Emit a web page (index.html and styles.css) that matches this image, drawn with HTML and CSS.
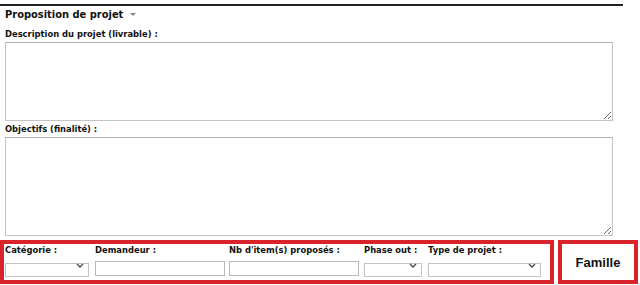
FILE: index.html
```html
<!DOCTYPE html>
<html lang="fr">
<head>
  <meta charset="UTF-8">
  <title>Proposition de projet</title>
  <link rel="stylesheet" href="styles.css">
</head>
<body>
<form class="project-form">
  <div class="section-head">
    <h2>Proposition de projet <span class="caret"></span></h2>
  </div>

  <label class="block-label first" for="livrable">Description du projet (livrable) :</label>
  <textarea id="livrable" class="long-text desc"></textarea>

  <label class="block-label" for="finalite">Objectifs (finalité) :</label>
  <textarea id="finalite" class="long-text goals"></textarea>

  <div class="bottom-row">
    <div class="fields-box">
      <div class="field">
        <label>Catégorie :</label>
        <span class="select-wrap w-cat">
          <select name="categorie"><option></option></select>
          <svg class="chev" width="8" height="5" viewBox="0 0 8 5"><path d="M1 1 L4 4 L7 1" fill="none" stroke="#444" stroke-width="1.3"/></svg>
        </span>
      </div>
      <div class="field">
        <label>Demandeur :</label>
        <input type="text" name="demandeur" class="w-dem">
      </div>
      <div class="field">
        <label>Nb d'item(s) proposés :</label>
        <input type="text" name="nb_items" class="w-nb">
      </div>
      <div class="field">
        <label>Phase out :</label>
        <span class="select-wrap w-phase">
          <select name="phase_out"><option></option></select>
          <svg class="chev" width="8" height="5" viewBox="0 0 8 5"><path d="M1 1 L4 4 L7 1" fill="none" stroke="#444" stroke-width="1.3"/></svg>
        </span>
      </div>
      <div class="field">
        <label>Type de projet :</label>
        <span class="select-wrap w-type">
          <select name="type_projet"><option></option></select>
          <svg class="chev" width="8" height="5" viewBox="0 0 8 5"><path d="M1 1 L4 4 L7 1" fill="none" stroke="#444" stroke-width="1.3"/></svg>
        </span>
      </div>
    </div>
    <div class="famille-box">Famille</div>
  </div>
</form>
</body>
</html>
```

FILE: styles.css
```css
body {
  margin: 0;
  padding: 0;
  background: #fff;
  font-family: "DejaVu Sans", Verdana, sans-serif;
  color: #111;
}
.project-form {
  padding-top: 4px;
}
.section-head {
  width: 623px;
  border-top: 2px solid #222;
}
h2 {
  margin: 2px 0 0 5px;
  font-family: "DejaVu Sans Condensed", "DejaVu Sans", sans-serif;
  font-stretch: condensed;
  font-size: 11px;
  font-weight: bold;
  line-height: 14px;
  color: #111;
}
.caret {
  display: inline-block;
  margin-left: 3px;
  vertical-align: 2px;
  border-left: 3px solid transparent;
  border-right: 3px solid transparent;
  border-top: 3px solid #888;
}
.block-label {
  display: block;
  margin: 3px 0 0 5px;
  font-size: 8.4px;
  font-weight: bold;
  line-height: 11px;
}
.block-label.first {
  margin-top: 7px;
}
.long-text {
  display: block;
  box-sizing: border-box;
  width: 608px;
  margin: 2px 0 0 5px;
  padding: 2px;
  border: 1px solid #c4c4c4;
  border-top-color: #b0b0b0;
  font-family: "DejaVu Sans", sans-serif;
  font-size: 9px;
}
.desc {
  height: 79px;
}
.goals {
  height: 99px;
}
.bottom-row {
  display: flex;
  gap: 4px;
  margin-top: 4px;
}
.fields-box {
  box-sizing: border-box;
  width: 554px;
  height: 44px;
  border: 4px solid #d8232a;
  padding: 1px 0 0 1px;
  display: grid;
  grid-template-columns: 90px 134px 135px 64px 113px;
}
.field label {
  display: block;
  font-size: 8.4px;
  font-weight: bold;
  line-height: 11px;
  white-space: nowrap;
}
.field input {
  box-sizing: border-box;
  height: 15px;
  margin: 1px 0 0 0;
  padding: 0 2px;
  border: 1px solid #b8b8b8;
  font-size: 9px;
}
.select-wrap {
  position: relative;
  display: block;
  margin-top: 2px;
}
.select-wrap select {
  box-sizing: border-box;
  width: 100%;
  height: 14px;
  padding: 0;
  border: 1px solid #c4c4c4;
  background: #fff;
  appearance: none;
  font-size: 9px;
}
.select-wrap .chev {
  position: absolute;
  right: 5px;
  top: 5px;
}
.w-cat { width: 84px; }
.w-dem { width: 130px; }
.w-nb { width: 130px; }
.w-phase { width: 58px; }
.w-type { width: 113px; }
.famille-box {
  box-sizing: border-box;
  width: 80px;
  height: 44px;
  border: 4px solid #d8232a;
  display: flex;
  align-items: center;
  justify-content: center;
  font-family: "Liberation Sans", Arial, sans-serif;
  font-size: 13px;
  font-weight: bold;
  color: #111;
}
```
